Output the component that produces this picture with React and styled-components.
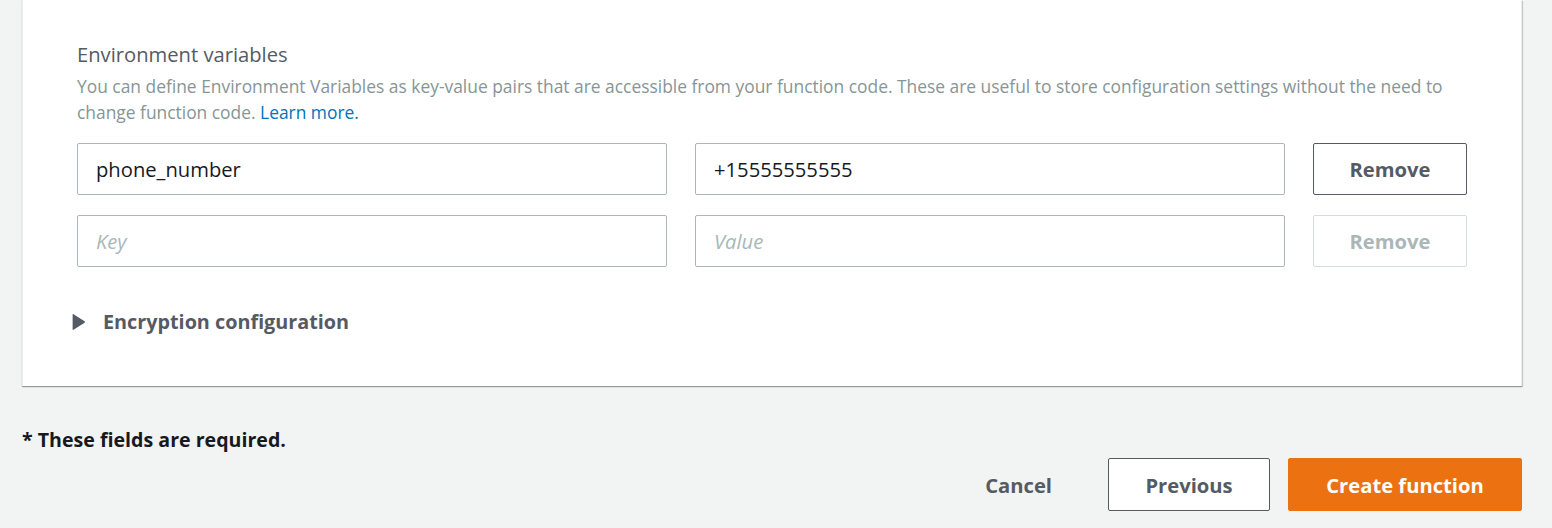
import React from "react";
import styled, { createGlobalStyle } from "styled-components";

const GlobalStyle = createGlobalStyle`
    html, body {
        margin: 0;
        padding: 0;
        background: #f2f3f3;
        font-family: "Open Sans", "Noto Sans", Arial, sans-serif;
    }
    * {
        box-sizing: border-box;
    }
`;

const Page = styled.div`
    width: 1552px;
    height: 528px;
    overflow: hidden;
    padding: 0 30px 0 22px;
`;

const Card = styled.section`
    background: #ffffff;
    border-left: 1px solid #eaeded;
    border-right: 1px solid #eaeded;
    box-shadow: 0 1px 1px 0 rgba(0, 28, 36, 0.3), 1px 1px 1px 0 rgba(0, 28, 36, 0.15);
    padding: 42px 54px 51px 54px;
`;

const Heading = styled.h3`
    margin: 0;
    font-size: 20.2px;
    line-height: 24px;
    font-weight: 400;
    color: #545b64;
`;

const Description = styled.p`
    margin: 7px 0 0 0;
    font-size: 17.4px;
    line-height: 26px;
    color: #879596;
`;

const Link = styled.a`
    color: #0073bb;
    text-decoration: none;
`;

const Rows = styled.div`
    margin-top: 18px;
    display: flex;
    flex-direction: column;
    gap: 20px;
`;

const Row = styled.div`
    display: grid;
    grid-template-columns: 1fr 1fr 154px;
    gap: 28px;
`;

const Input = styled.input`
    height: 52px;
    border: 1px solid #aab7b8;
    border-radius: 2px;
    padding: 0 18px;
    font-family: inherit;
    font-size: 20.2px;
    color: #16191f;
    background: #ffffff;
    outline: none;

    &::placeholder {
        color: #aab7b8;
        font-style: italic;
    }
`;

const Button = styled.button`
    height: ${props => (props.tall ? "53px" : "52px")};
    border-radius: 2px;
    font-family: inherit;
    font-weight: 700;
    font-size: 20.2px;
    cursor: pointer;
    padding: 0 16px;
    border: 1px solid ${props => (props.disabled ? "#d5dbdb" : "#545b64")};
    color: ${props => (props.disabled ? "#aab7b8" : "#545b64")};
    background: #ffffff;
`;

const PrimaryButton = styled(Button)`
    border-color: #ec7211;
    background: #ec7211;
    color: #ffffff;
    width: 234px;
`;

const LinkButton = styled(Button)`
    border-color: transparent;
    background: transparent;
    padding: 0 20px;
`;

const Expander = styled.div`
    margin-top: 42px;
    display: flex;
    align-items: center;
    gap: 17px;
    margin-left: -5px;
    font-size: 19.8px;
    line-height: 26px;
    font-weight: 700;
    color: #545b64;
`;

const Caret = styled.svg`
    width: 14px;
    height: 18px;
    flex: none;
`;

const Footer = styled.div`
    margin-top: 42px;
`;

const Required = styled.div`
    font-size: 19.6px;
    line-height: 24px;
    font-weight: 700;
    color: #16191f;
`;

const Actions = styled.div`
    margin-top: 6px;
    display: flex;
    justify-content: flex-end;
    align-items: center;
    gap: 18px;
`;

const variables = [
    { key: "phone_number", value: "+15555555555" },
    { key: "", value: "" }
];

export default function App() {
    return (
        <Page>
            <GlobalStyle />
            <Card>
                <Heading>Environment variables</Heading>
                <Description>
                    You can define Environment Variables as key-value pairs that are accessible from
                    your function code. These are useful to store configuration settings without the
                    need to change function code. <Link href="#">Learn more.</Link>
                </Description>
                <Rows>
                    {variables.map((v, i) => (
                        <Row key={i}>
                            <Input defaultValue={v.key} placeholder="Key" />
                            <Input defaultValue={v.value} placeholder="Value" />
                            <Button disabled={v.key === ""}>Remove</Button>
                        </Row>
                    ))}
                </Rows>
                <Expander>
                    <Caret viewBox="0 0 14 18">
                        <path
                            d="M1.5 1.2 L12.6 8.2 Q13.4 9 12.6 9.8 L1.5 16.8 Q0.6 17.2 0.6 16.2 V1.8 Q0.6 0.8 1.5 1.2 Z"
                            fill="#545b64"
                        />
                    </Caret>
                    Encryption configuration
                </Expander>
            </Card>
            <Footer>
                <Required>* These fields are required.</Required>
                <Actions>
                    <LinkButton tall>Cancel</LinkButton>
                    <Button tall style={{ width: 162, marginLeft: 17 }}>
                        Previous
                    </Button>
                    <PrimaryButton tall>Create function</PrimaryButton>
                </Actions>
            </Footer>
        </Page>
    );
}
